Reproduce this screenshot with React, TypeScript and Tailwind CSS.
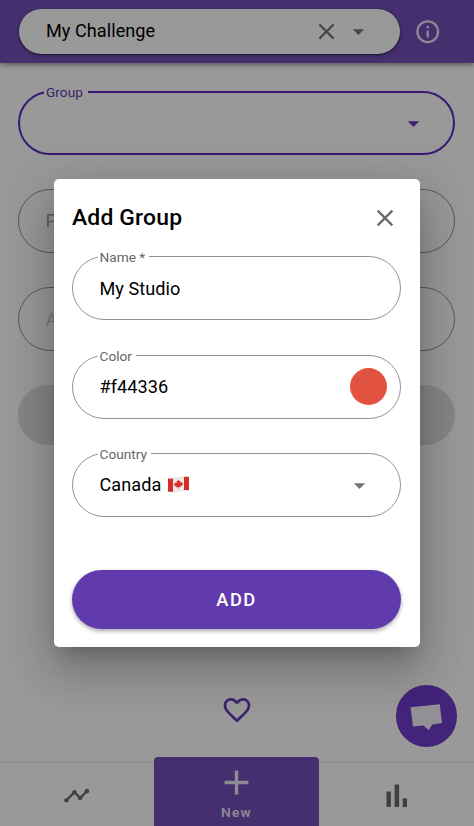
import type { ReactNode } from "react";
import { MdAdd, MdArrowDropDown, MdClose, MdFavoriteBorder, MdInfoOutline, MdTimeline } from "react-icons/md";

type FieldProps = { label?: string; focused?: boolean; children?: ReactNode };

function Field({ label, focused, children }: FieldProps) {
  return (
    <div
      className={`relative flex h-16 items-center rounded-full text-[18.1px] tracking-[0.05px] ${
        focused ? "border-2 border-[#5f2bbd] pl-[26px]" : "border border-[#949494] pl-[26.5px]"
      }`}
    >
      {label && (
        <span
          className={`absolute bg-white pl-[2px] text-[13.7px] leading-[18px] tracking-normal ${
            focused ? "-top-[10px] left-[24px] pr-[5px] text-[#673ab7]" : "-top-[9px] left-[24.5px] pr-[4px] text-[#666]"
          }`}
        >
          {label}
        </span>
      )}
      {children}
    </div>
  );
}

function Flag() {
  return (
    <svg className="ml-[7px] h-[17px] w-[21px]" viewBox="0 0 21 17">
      <path d="M0 2.4Q5 3 10.5 1.6T21 1V14.3Q16 13.5 10.5 15T0 15.6Z" fill="#efe9e9" stroke="#cfc6c6" strokeWidth=".4" />
      <path d="M0 2.4Q2.5 2.8 5 2.5V15.8Q2.5 16 0 15.6ZM16 .9Q18.5.5 21 1V14.3Q18.5 13.9 16 14.1Z" fill="#d42c27" />
      <path d="M10.5 3.5l1 1.7 1-.5-.3 2.3 1.2-1.1.4.8 1.2-.2-.5 1.5.6.5-2.7 2 .2.8-1.9-.3v2h-.5v-2l-1.9.6.2-.9-2.7-1.7.6-.6-.5-1.2 1.2.1.4-.9 1.2.9-.3-2.2 1 .3z" fill="#dc302a" />
    </svg>
  );
}

function Page() {
  return (
    <div className="flex h-full flex-col bg-white">
      <header className="z-10 flex h-[63px] shrink-0 items-center bg-[#734fb9] pl-[18.5px] shadow-[0_2px_5px_rgba(0,0,0,0.4)]">
        <div className="flex h-[45px] w-[381px] items-center rounded-full bg-white pr-[28px] pl-[27.5px] text-[18.1px] tracking-[0.05px] shadow-[0_1px_3px_rgba(0,0,0,0.7)]">
          <span className="grow pb-[2px]">My Challenge</span>
          <MdClose className="size-[27px] text-[#757575]" />
          <MdArrowDropDown className="ml-[5px] size-[27px] text-[#757575]" />
        </div>
        <MdInfoOutline className="ml-[14px] size-[27.5px] text-[#eee8f8]" />
      </header>
      <main className="flex grow flex-col px-[18px] pt-[27.5px] pr-[19px]">
        <div className="flex flex-col gap-[34.3px]">
          <Field label="Group" focused>
            <MdArrowDropDown className="mr-[26px] ml-auto size-[27px] translate-y-[1px] text-[#673ab7]" />
          </Field>
          <Field><span className="text-[#a2a2a2]">P</span></Field>
          <Field><span className="text-[#c8c8c8]">A</span></Field>
          <div className="h-[60px] rounded-full bg-[#e0e0e0]" />
        </div>
        <div className="mt-auto flex justify-center pb-[37px]">
          <MdFavoriteBorder className="size-[32px] text-[#673ab7]" />
        </div>
      </main>
      <nav className="flex h-[63px] shrink-0 items-center shadow-[0_-1px_2px_rgba(0,0,0,0.13)]">
        <div className="flex w-[154px] justify-center">
          <MdTimeline className="size-[27.4px] translate-y-[1px] text-[#6b6b6b]" />
        </div>
        <div className="flex h-[69.5px] w-[165px] flex-col items-center self-end rounded-t-[4px] bg-[#734fb9] pt-[5px] text-white">
          <MdAdd className="size-[41px] text-[#eee8f8]" />
          <span className="mt-[1.5px] text-[13.7px] leading-[16px] font-medium tracking-[1.3px] text-[#eee8f8]">New</span>
        </div>
        <div className="flex grow justify-center">
          <svg className="size-[24px]" viewBox="0 0 24 24" fill="#6b6b6b">
            <path d="M1.5 8.5h4.4v15.4H1.5zM9.6 1.4h4.5v22.5H9.6zM17.7 15.3h4.3v8.6h-4.3z" />
          </svg>
        </div>
      </nav>
      <div className="absolute top-[685px] left-[395.5px] flex size-[61.5px] items-center justify-center rounded-full bg-[#6f3dcb]">
        <svg className="size-[61px]" viewBox="0 0 61 61">
          <path d="M14.5 22.3 43.8 19.2 46 38.1 36.3 39.5 32.7 45 27.3 40.4 17 41.5Z" fill="#f3f0f8" />
        </svg>
      </div>
    </div>
  );
}

function AddGroupDialog() {
  return (
    <div className="absolute inset-0 z-20 flex items-center justify-center bg-black/40 pr-px">
      <div className="flex h-[468.5px] w-[366px] flex-col rounded-[5px] bg-white px-[18.5px] pb-[18.5px] shadow-[0_13px_17px_-8px_rgba(0,0,0,0.2),0_27px_43px_3px_rgba(0,0,0,0.14),0_10px_52px_9px_rgba(0,0,0,0.12)]">
        <div className="flex h-[77.6px] shrink-0 items-center justify-between pr-[2px]">
          <h2 className="translate-y-[1px] text-[22.9px] font-medium tracking-[0.17px]">Add Group</h2>
          <MdClose className="size-[28px] text-[#6b6b6b]" />
        </div>
        <div className="flex flex-col gap-[34.2px]">
          <Field label="Name *">My Studio</Field>
          <Field label="Color">
            #f44336
            <span className="mr-[13.5px] ml-auto size-[36.5px] rounded-full bg-[#e25241]" />
          </Field>
          <Field label="Country">
            Canada
            <Flag />
            <MdArrowDropDown className="mr-[27px] ml-auto size-[27px] translate-y-[1px] text-[#757575]" />
          </Field>
        </div>
        <button className="mt-auto h-[59px] rounded-full bg-[#613bae] text-[18.3px] font-medium tracking-[1.45px] text-white shadow-[0_2px_4px_rgba(0,0,0,0.35)]">
          ADD
        </button>
      </div>
    </div>
  );
}

export default function App() {
  return (
    <div className="relative h-[826px] w-[474px] overflow-hidden text-black [font-family:Roboto,sans-serif]">
      <Page />
      <AddGroupDialog />
    </div>
  );
}
